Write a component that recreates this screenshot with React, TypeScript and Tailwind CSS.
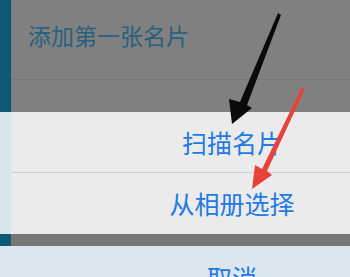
const cjk = { fontFamily: '"Noto Sans CJK SC", "Noto Sans", sans-serif' }

function Arrows() {
  return (
    <svg className="pointer-events-none absolute inset-0" width="350" height="277" viewBox="0 0 350 277">
      <polygon points="278,13 281,15 247,105 252,108 232,124 229,99 240,102" fill="#0a0a0a" />
      <polygon points="302,87 305,89 267,171 272,175 252,189 255,165 262,169" fill="#e8433b" />
    </svg>
  )
}

export default function App() {
  return (
    <div className="relative h-[277px] w-[350px] overflow-hidden bg-[#dde6ec]" style={cjk}>
      <div className="flex h-[112px]">
        <div className="w-[11px] bg-[#0d5977]" />
        <div className="flex flex-1 flex-col bg-[#808080]">
          <div className="flex h-[80px] items-center border-b border-[#767676] pl-[17px] pb-[8px] text-[23px] text-[#28607f]">
            添加第一张名片
          </div>
        </div>
      </div>
      <div className="flex h-[122px]">
        <div className="w-[11px] bg-[#d6e4eb]" />
        <div className="flex flex-1 flex-col bg-[#ebebeb] text-[25px] text-[#1f7be3]">
          <div className="flex h-[61px] items-center justify-center border-b border-[#cfcfcf] pl-[103px] pt-[1px]">扫描名片</div>
          <div className="flex h-[61px] items-center justify-center pl-[103px] pt-[1px]">从相册选择</div>
        </div>
      </div>
      <div className="flex h-[12px]">
        <div className="w-[11px] bg-[#0d5977]" />
        <div className="flex-1 bg-[#777777]" />
      </div>
      <div className="flex h-[60px] items-center justify-center pl-[114px] pt-[4px] text-[25px] text-[#1f7be3]">取消</div>
      <Arrows />
    </div>
  )
}
